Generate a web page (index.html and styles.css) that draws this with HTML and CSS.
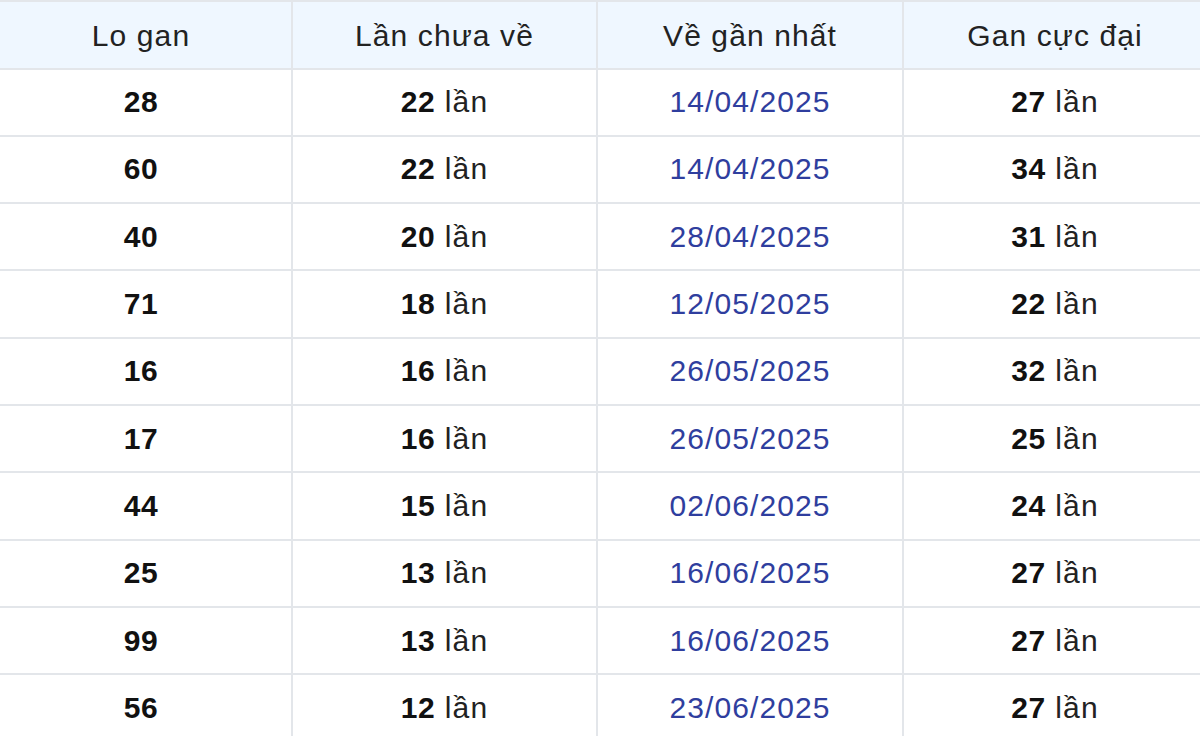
FILE: index.html
```html
<!DOCTYPE html>
<html lang="vi">
<head>
<meta charset="utf-8">
<title>Lo gan</title>
<link rel="stylesheet" href="styles.css">
</head>
<body>
<div class="table">
  <div class="cell head"><span>Lo gan</span></div>
  <div class="cell head"><span>Lần chưa về</span></div>
  <div class="cell head"><span>Về gần nhất</span></div>
  <div class="cell head"><span>Gan cực đại</span></div>

  <div class="cell"><span><b>28</b></span></div>
  <div class="cell"><span><b>22</b> lần</span></div>
  <div class="cell date"><span>14/04/2025</span></div>
  <div class="cell"><span><b>27</b> lần</span></div>

  <div class="cell"><span><b>60</b></span></div>
  <div class="cell"><span><b>22</b> lần</span></div>
  <div class="cell date"><span>14/04/2025</span></div>
  <div class="cell"><span><b>34</b> lần</span></div>

  <div class="cell"><span><b>40</b></span></div>
  <div class="cell"><span><b>20</b> lần</span></div>
  <div class="cell date"><span>28/04/2025</span></div>
  <div class="cell"><span><b>31</b> lần</span></div>

  <div class="cell"><span><b>71</b></span></div>
  <div class="cell"><span><b>18</b> lần</span></div>
  <div class="cell date"><span>12/05/2025</span></div>
  <div class="cell"><span><b>22</b> lần</span></div>

  <div class="cell"><span><b>16</b></span></div>
  <div class="cell"><span><b>16</b> lần</span></div>
  <div class="cell date"><span>26/05/2025</span></div>
  <div class="cell"><span><b>32</b> lần</span></div>

  <div class="cell"><span><b>17</b></span></div>
  <div class="cell"><span><b>16</b> lần</span></div>
  <div class="cell date"><span>26/05/2025</span></div>
  <div class="cell"><span><b>25</b> lần</span></div>

  <div class="cell"><span><b>44</b></span></div>
  <div class="cell"><span><b>15</b> lần</span></div>
  <div class="cell date"><span>02/06/2025</span></div>
  <div class="cell"><span><b>24</b> lần</span></div>

  <div class="cell"><span><b>25</b></span></div>
  <div class="cell"><span><b>13</b> lần</span></div>
  <div class="cell date"><span>16/06/2025</span></div>
  <div class="cell"><span><b>27</b> lần</span></div>

  <div class="cell"><span><b>99</b></span></div>
  <div class="cell"><span><b>13</b> lần</span></div>
  <div class="cell date"><span>16/06/2025</span></div>
  <div class="cell"><span><b>27</b> lần</span></div>

  <div class="cell"><span><b>56</b></span></div>
  <div class="cell"><span><b>12</b> lần</span></div>
  <div class="cell date"><span>23/06/2025</span></div>
  <div class="cell"><span><b>27</b> lần</span></div>
</div>
</body>
</html>
```

FILE: styles.css
```css
html, body {
  margin: 0;
  padding: 0;
  background: #ffffff;
  overflow: hidden;
}

.table {
  display: grid;
  grid-template-columns: 300px 303px 304px 302px;
  grid-template-rows: 65.5px;
  grid-auto-rows: 65.33px;
  gap: 2px;
  padding-top: 2px;
  margin-left: -9px;
  width: 1215px;
  background: #e3e6ea;
  font-family: "Liberation Sans", Arial, sans-serif;
  font-size: 30px;
  letter-spacing: 1.1px;
  color: #222222;
}

.cell {
  display: flex;
  align-items: center;
  justify-content: center;
  background: #ffffff;
  white-space: nowrap;
}

.cell b {
  color: #111111;
  font-weight: bold;
  letter-spacing: 0.6px;
}

.head {
  background: #eff7ff;
  color: #222222;
  padding-top: 2px;
}

.date {
  color: #2f3e9e;
}
```
